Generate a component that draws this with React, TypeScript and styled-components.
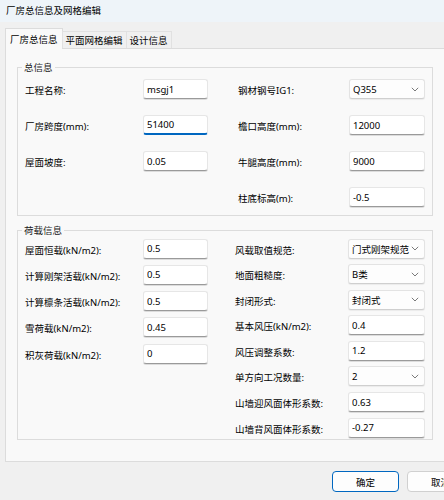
import React from "react";
import styled, { createGlobalStyle, css } from "styled-components";

const GlobalStyle = createGlobalStyle`
  html, body {
    margin: 0;
    padding: 0;
  }
  body {
    width: 444px;
    height: 500px;
    overflow: hidden;
    background: #f0f0f0;
    font-family: "Noto Sans", "Noto Sans CJK SC", sans-serif;
    font-size: 9.5px;
    color: #000;
  }
`;

type FieldDef = {
  label: string;
  value: string;
  select?: boolean;
  focused?: boolean;
};

const generalLeft: FieldDef[] = [
  { label: "工程名称:", value: "msgj1" },
  { label: "厂房跨度(mm):", value: "51400", focused: true },
  { label: "屋面坡度:", value: "0.05" },
];

const generalRight: FieldDef[] = [
  { label: "钢材钢号IG1:", value: "Q355", select: true },
  { label: "檐口高度(mm):", value: "12000" },
  { label: "牛腿高度(mm):", value: "9000" },
  { label: "柱底标高(m):", value: "-0.5" },
];

const loadLeft: FieldDef[] = [
  { label: "屋面恒载(kN/m2):", value: "0.5" },
  { label: "计算刚架活载(kN/m2):", value: "0.5" },
  { label: "计算檩条活载(kN/m2):", value: "0.5" },
  { label: "雪荷载(kN/m2):", value: "0.45" },
  { label: "积灰荷载(kN/m2):", value: "0" },
];

const loadRight: FieldDef[] = [
  { label: "风载取值规范:", value: "门式刚架规范", select: true },
  { label: "地面粗糙度:", value: "B类", select: true },
  { label: "封闭形式:", value: "封闭式", select: true },
  { label: "基本风压(kN/m2):", value: "0.4" },
  { label: "风压调整系数:", value: "1.2" },
  { label: "单方向工况数量:", value: "2", select: true },
  { label: "山墙迎风面体形系数:", value: "0.63" },
  { label: "山墙背风面体形系数:", value: "-0.27" },
];

const Chevron = () => (
  <svg width="8" height="5" viewBox="0 0 8 5">
    <path d="M0.8 0.8 L4 4 L7.2 0.8" fill="none" stroke="#6b6b6b" strokeWidth="0.9" />
  </svg>
);

const FieldList = ({
  fields,
  labelWidth,
  inputWidth,
  rowGap,
}: {
  fields: FieldDef[];
  labelWidth: number;
  inputWidth: number;
  rowGap: number;
}) => (
  <FieldColumn $rowGap={rowGap}>
    {fields.map((f) => (
      <Field key={f.label}>
        <Label $width={labelWidth}>{f.label}</Label>
        {f.select ? (
          <Select $width={inputWidth}>
            <span>{f.value}</span>
            <Chevron />
          </Select>
        ) : (
          <TextBox $width={inputWidth} $focused={f.focused} defaultValue={f.value} />
        )}
      </Field>
    ))}
  </FieldColumn>
);

export default function App() {
  return (
    <>
      <GlobalStyle />
      <Dialog>
        <TitleBar>厂房总信息及网格编辑</TitleBar>
        <TabStrip>
          <Tab $active>厂房总信息</Tab>
          <Tab>平面网格编辑</Tab>
          <Tab>设计信息</Tab>
        </TabStrip>
        <Panel>
          <Group $top={11.5} $padTop={5.5} $padBottom={7.5}>
            <Legend>总信息</Legend>
            <Columns $gap={30}>
              <FieldList fields={generalLeft} labelWidth={118} inputWidth={65} rowGap={16} />
              <FieldList fields={generalRight} labelWidth={111} inputWidth={76} rowGap={16} />
            </Columns>
          </Group>
          <Group $top={8.5} $padTop={1.5} $padBottom={1.5}>
            <Legend>荷载信息</Legend>
            <Columns $gap={27}>
              <FieldList fields={loadLeft} labelWidth={118} inputWidth={65} rowGap={6.25} />
              <FieldList fields={loadRight} labelWidth={113} inputWidth={77} rowGap={5.6} />
            </Columns>
          </Group>
        </Panel>
        <Footer>
          <Button $primary>确定</Button>
          <Button>取消</Button>
        </Footer>
      </Dialog>
    </>
  );
}

// ----------------------------------------------------------------------------

const Dialog = styled.div`
  width: 486px;
  height: 500px;
  display: flex;
  flex-direction: column;
`;

const TitleBar = styled.div`
  height: 22px;
  box-sizing: border-box;
  padding: 0 0 2px 6px;
  display: flex;
  align-items: center;
  background: #eef4f9;
`;

const TabStrip = styled.div`
  display: flex;
  align-items: flex-end;
  padding: 6px 0 0 5px;
  position: relative;
  z-index: 1;
`;

const Tab = styled.div<{ $active?: boolean }>`
  display: flex;
  align-items: center;
  box-sizing: border-box;
  border: 1px solid #e1e1e1;
  border-bottom: none;
  ${(p) =>
    p.$active
      ? css`
          height: 21px;
          padding: 0 4px 1px;
          background: #f9f9f9;
          border-color: #dcdcdc;
          margin-bottom: -1px;
        `
      : css`
          height: 17px;
          padding: 0 3px;
          background: #f0f0f0;
          margin-left: -1px;
        `}
`;

const Panel = styled.div`
  margin: 0 5px;
  height: 414px;
  box-sizing: border-box;
  background: #f9f9f9;
  border: 1px solid #dcdcdc;
  padding: 0 11px;
  display: flex;
  flex-direction: column;
`;

const Group = styled.fieldset<{ $top: number; $padTop: number; $padBottom: number }>`
  margin: ${(p) => p.$top}px 0 0;
  width: 416px;
  box-sizing: border-box;
  border: 1px solid #dcdcdc;
  padding: ${(p) => `${p.$padTop}px 7px ${p.$padBottom}px`};
  min-width: 0;
`;

const Legend = styled.legend`
  padding: 0 2px;
  margin-left: -3px;
  line-height: 13px;
  color: #1a1a1a;
`;

const Columns = styled.div<{ $gap: number }>`
  display: flex;
  align-items: flex-start;
  gap: ${(p) => p.$gap}px;
`;

const FieldColumn = styled.div<{ $rowGap: number }>`
  display: flex;
  flex-direction: column;
  gap: ${(p) => p.$rowGap}px;
`;

const Field = styled.div`
  display: flex;
  align-items: center;
  height: 20px;
`;

const Label = styled.div<{ $width: number }>`
  width: ${(p) => p.$width}px;
  padding-top: 2px;
  white-space: nowrap;
`;

const TextBox = styled.input<{ $width: number; $focused?: boolean }>`
  width: ${(p) => p.$width}px;
  height: 20px;
  box-sizing: border-box;
  margin: 0;
  padding: 0 3px;
  font: inherit;
  color: #000;
  background: #ffffff;
  border: 1px solid #e6e6e6;
  border-bottom: 1px solid #9a9a9a;
  border-radius: 3px;
  box-shadow: 0 1px 0 #dcdcdc;
  outline: none;
  ${(p) =>
    p.$focused &&
    css`
      border-bottom: 2px solid #0067c0;
      box-shadow: none;
    `}
`;

const Select = styled.div<{ $width: number }>`
  width: ${(p) => p.$width}px;
  height: 20px;
  box-sizing: border-box;
  padding: 0 5px 0 3px;
  display: flex;
  align-items: center;
  justify-content: space-between;
  gap: 2px;
  background: #fdfdfd;
  border: 1px solid #e3e3e3;
  border-bottom-color: #cfcfcf;
  border-radius: 3px;
  box-shadow: 0 1px 1px rgba(0, 0, 0, 0.06);
  white-space: nowrap;
  overflow: hidden;

  svg {
    flex: none;
  }
`;

const Footer = styled.div`
  display: flex;
  justify-content: flex-end;
  gap: 8px;
  padding: 9px 12px 0 0;
`;

const Button = styled.div<{ $primary?: boolean }>`
  width: 67px;
  height: 21px;
  box-sizing: border-box;
  display: flex;
  align-items: center;
  justify-content: center;
  background: #fdfdfd;
  border: 1px solid ${(p) => (p.$primary ? "#0067c0" : "#d0d0d0")};
  border-radius: 4px;
`;
